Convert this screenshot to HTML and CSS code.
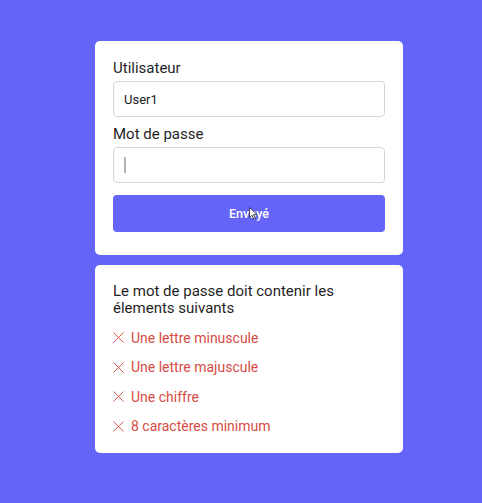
FILE: index.html
```html
<!DOCTYPE html>
<html lang="fr">
<head>
<meta charset="utf-8">
<link rel="stylesheet" href="styles.css">
</head>
<body>
<main class="page">
  <section class="card form-card">
    <div class="label">Utilisateur</div>
    <div class="field"><span class="value">User1</span></div>
    <div class="label">Mot de passe</div>
    <div class="field"><span class="caret"></span></div>
    <div class="button">Envoyé
      <svg class="cursor" width="9" height="13" viewBox="0 0 9 13"><path d="M0.5 0.5 L0.5 10.5 L3 8.2 L4.8 12.2 L6.3 11.5 L4.6 7.6 L8 7.6 Z" fill="#fff" stroke="#222" stroke-width="0.8"/></svg>
    </div>
  </section>
  <section class="card rules-card">
    <p class="rules-title">Le mot de passe doit contenir les élements suivants</p>
    <ul class="rules">
      <li><svg class="x" width="11" height="11" viewBox="0 0 11 11"><path d="M0.5 0.5 L10.5 10.5 M10.5 0.5 L0.5 10.5" stroke="#dc5a54" stroke-width="1"/></svg>Une lettre minuscule</li>
      <li><svg class="x" width="11" height="11" viewBox="0 0 11 11"><path d="M0.5 0.5 L10.5 10.5 M10.5 0.5 L0.5 10.5" stroke="#dc5a54" stroke-width="1"/></svg>Une lettre majuscule</li>
      <li><svg class="x" width="11" height="11" viewBox="0 0 11 11"><path d="M0.5 0.5 L10.5 10.5 M10.5 0.5 L0.5 10.5" stroke="#dc5a54" stroke-width="1"/></svg>Une chiffre</li>
      <li><svg class="x" width="11" height="11" viewBox="0 0 11 11"><path d="M0.5 0.5 L10.5 10.5 M10.5 0.5 L0.5 10.5" stroke="#dc5a54" stroke-width="1"/></svg>8 caractères minimum</li>
    </ul>
  </section>
</main>
</body>
</html>
```
FILE: styles.css
```css
html, body {
  margin: 0;
  padding: 0;
}
body {
  background: #6464f9;
  font-family: Roboto, "Liberation Sans", sans-serif;
  width: 482px;
  height: 503px;
  overflow: hidden;
}
.page {
  display: flex;
  flex-direction: column;
  align-items: flex-start;
  padding: 41px 0 0 95px;
  gap: 10px;
}
.card {
  box-sizing: border-box;
  width: 308px;
  background: #fff;
  border-radius: 5px;
  padding: 0 18px;
}
.form-card {
  height: 214px;
  padding-top: 17px;
}
.label {
  font-size: 15px;
  line-height: 20px;
  color: #1f1f1f;
  margin-bottom: 3px;
}
.field {
  box-sizing: border-box;
  height: 36px;
  border: 1px solid #d6d6d6;
  border-radius: 4px;
  display: flex;
  align-items: center;
  padding-left: 10px;
  margin-bottom: 7px;
}
.value {
  font-size: 13px;
  color: #222;
}
.caret {
  width: 2px;
  height: 16px;
  background: #b4b4b4;
}
.field + .label + .field {
  margin-bottom: 12px;
}
.button {
  position: relative;
  height: 37px;
  border-radius: 4px;
  background: #6464f9;
  color: #fff;
  font-size: 12.5px;
  font-weight: 500;
  display: flex;
  align-items: center;
  justify-content: center;
}
.cursor {
  position: absolute;
  left: 136px;
  top: 12px;
}
.rules-card {
  height: 188px;
  padding-top: 18px;
}
.rules-title {
  margin: 0;
  font-size: 15px;
  line-height: 17px;
  color: #1f1f1f;
  padding-right: 20px;
}
.rules {
  list-style: none;
  margin: 6px 0 0;
  padding: 0;
  display: flex;
  flex-direction: column;
}
.rules li {
  display: flex;
  align-items: center;
  height: 29.5px;
  font-size: 14px;
  color: #d64b44;
}
.x {
  margin-right: 7px;
  flex: none;
}
```
